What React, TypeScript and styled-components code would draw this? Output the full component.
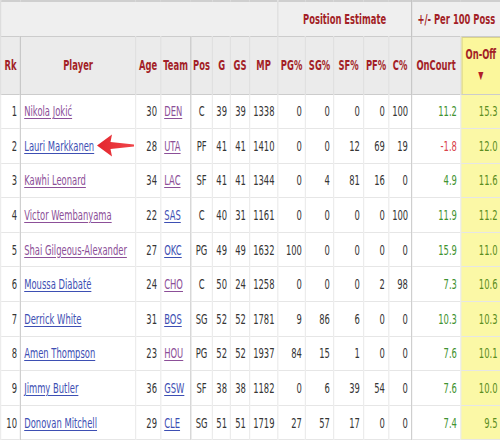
import React from "react";
import styled, { createGlobalStyle } from "styled-components";

const K = 0.6; // horizontal compression of the table
const u = (px: number) => `${px / K}px`;

const GlobalStyle = createGlobalStyle`
  html, body { margin: 0; padding: 0; background: #ffffff; }
  body { font-family: "DejaVu Sans", Verdana, sans-serif; }
`;

const Frame = styled.div`
  position: relative;
  width: 500px;
  height: 440px;
  overflow: hidden;
  background: #ffffff;
`;

const Squeeze = styled.div`
  width: ${u(500)};
  transform: scaleX(${K});
  transform-origin: 0 0;
`;

const Table = styled.table`
  width: 100%;
  table-layout: fixed;
  border-collapse: collapse;
  font-family: "DejaVu Sans", Verdana, sans-serif;
  font-size: 14px;
  color: #353535;
`;

const Col = styled.col<{ $w: number }>`
  width: ${(p) => u(p.$w)};
`;

const OverRow = styled.tr`
  height: 35px;
  background: #efefef;
  border-top: 2px solid #cfcfcf;
  border-bottom: 1px solid #cccccc;
`;

const OverCell = styled.th<{ $dark?: boolean }>`
  font-weight: bold;
  color: #a31f27;
  text-align: center;
  white-space: nowrap;
  padding: 0;
  border-left: 2px solid ${(p) => (p.$dark ? "#c4c4c4" : "#dddddd")};
`;

const HeadRow = styled.tr`
  height: 58px;
  background: #ebebeb;
  border-bottom: 1px solid #cccccc;
`;

const HeadCell = styled.th<{ $sep?: boolean; $sorted?: boolean }>`
  font-weight: bold;
  color: #a31f27;
  text-align: center;
  vertical-align: middle;
  white-space: nowrap;
  padding: 0;
  line-height: 21px;
  border-left: 2px solid ${(p) => (p.$sep ? "#c8c8c8" : "#e0e0e0")};
  background: ${(p) => (p.$sorted ? "#fbf79c" : "transparent")};
  ${(p) => (p.$sorted ? "box-shadow: inset 2px 1px 0 #d9d28a;" : "")}
`;

const SortMark = styled.span`
  display: block;
  font-size: 11px;
  color: #b0202a;
`;

const BodyRow = styled.tr`
  height: 34.6px;
  border-bottom: 1px solid #e6e6e6;
`;

type Align = "left" | "right" | "center";

const Cell = styled.td<{ $align?: Align; $sep?: boolean; $sorted?: boolean; $tone?: "pos" | "neg" }>`
  text-align: ${(p) => p.$align ?? "right"};
  vertical-align: middle;
  white-space: nowrap;
  padding: 0 ${u(3)};
  border-left: 2px solid ${(p) => (p.$sep ? "#cfcfcf" : "#ececec")};
  background: ${(p) => (p.$sorted ? "#fbf8a6" : "transparent")};
  color: ${(p) => (p.$tone === "pos" ? (p.$sorted ? "#5b8d1f" : "#3f9331") : p.$tone === "neg" ? "#d9434a" : "#353535")};
`;

const PlayerLink = styled.a<{ $visited?: boolean }>`
  color: ${(p) => (p.$visited ? "#8c4f98" : "#3d4fb3")};
  text-decoration: underline;
  text-underline-offset: 2px;
`;

const Arrow = styled.svg`
  position: absolute;
  left: 96px;
  top: 133px;
  width: 40px;
  height: 25px;
  pointer-events: none;
`;

type Row = {
  rk: number;
  name: string;
  nameVisited: boolean;
  age: number;
  team: string;
  teamVisited: boolean;
  pos: string;
  g: number;
  gs: number;
  mp: number;
  pg: number;
  sg: number;
  sf: number;
  pf: number;
  c: number;
  on: string;
  onOff: string;
};

const rows: Row[] = [
  { rk: 1, name: "Nikola Jokić", nameVisited: true, age: 30, team: "DEN", teamVisited: true, pos: "C", g: 39, gs: 39, mp: 1338, pg: 0, sg: 0, sf: 0, pf: 0, c: 100, on: "11.2", onOff: "15.3" },
  { rk: 2, name: "Lauri Markkanen", nameVisited: false, age: 28, team: "UTA", teamVisited: true, pos: "PF", g: 41, gs: 41, mp: 1410, pg: 0, sg: 0, sf: 12, pf: 69, c: 19, on: "-1.8", onOff: "12.0" },
  { rk: 3, name: "Kawhi Leonard", nameVisited: true, age: 34, team: "LAC", teamVisited: true, pos: "SF", g: 41, gs: 41, mp: 1344, pg: 0, sg: 4, sf: 81, pf: 16, c: 0, on: "4.9", onOff: "11.6" },
  { rk: 4, name: "Victor Wembanyama", nameVisited: true, age: 22, team: "SAS", teamVisited: false, pos: "C", g: 40, gs: 31, mp: 1161, pg: 0, sg: 0, sf: 0, pf: 0, c: 100, on: "11.9", onOff: "11.2" },
  { rk: 5, name: "Shai Gilgeous-Alexander", nameVisited: true, age: 27, team: "OKC", teamVisited: false, pos: "PG", g: 49, gs: 49, mp: 1632, pg: 100, sg: 0, sf: 0, pf: 0, c: 0, on: "15.9", onOff: "11.0" },
  { rk: 6, name: "Moussa Diabaté", nameVisited: false, age: 24, team: "CHO", teamVisited: true, pos: "C", g: 50, gs: 24, mp: 1258, pg: 0, sg: 0, sf: 0, pf: 2, c: 98, on: "7.3", onOff: "10.6" },
  { rk: 7, name: "Derrick White", nameVisited: false, age: 31, team: "BOS", teamVisited: false, pos: "SG", g: 52, gs: 52, mp: 1781, pg: 9, sg: 86, sf: 6, pf: 0, c: 0, on: "10.3", onOff: "10.3" },
  { rk: 8, name: "Amen Thompson", nameVisited: false, age: 23, team: "HOU", teamVisited: true, pos: "PG", g: 52, gs: 52, mp: 1937, pg: 84, sg: 15, sf: 1, pf: 0, c: 0, on: "7.6", onOff: "10.1" },
  { rk: 9, name: "Jimmy Butler", nameVisited: false, age: 36, team: "GSW", teamVisited: false, pos: "SF", g: 38, gs: 38, mp: 1182, pg: 0, sg: 6, sf: 39, pf: 54, c: 0, on: "7.6", onOff: "10.0" },
  { rk: 10, name: "Donovan Mitchell", nameVisited: false, age: 29, team: "CLE", teamVisited: false, pos: "SG", g: 51, gs: 51, mp: 1719, pg: 27, sg: 57, sf: 17, pf: 0, c: 0, on: "7.4", onOff: "9.5" },
];

const widths = [20, 115, 25, 30, 22, 18, 19, 28, 28, 28, 30, 25, 23, 49, 40];

export default function App() {
  return (
    <Frame>
      <GlobalStyle />
      <Squeeze>
        <Table>
          <colgroup>
            {widths.map((w, i) => (
              <Col key={i} $w={w} />
            ))}
          </colgroup>
          <thead>
            <OverRow>
              <OverCell colSpan={8} />
              <OverCell colSpan={5}>Position Estimate</OverCell>
              <OverCell colSpan={2} $dark>
                +/- Per 100 Poss
              </OverCell>
            </OverRow>
            <HeadRow>
              <HeadCell>Rk</HeadCell>
              <HeadCell $sep>Player</HeadCell>
              <HeadCell>Age</HeadCell>
              <HeadCell>Team</HeadCell>
              <HeadCell $sep>Pos</HeadCell>
              <HeadCell>G</HeadCell>
              <HeadCell>GS</HeadCell>
              <HeadCell>MP</HeadCell>
              <HeadCell>PG%</HeadCell>
              <HeadCell>SG%</HeadCell>
              <HeadCell>SF%</HeadCell>
              <HeadCell>PF%</HeadCell>
              <HeadCell>C%</HeadCell>
              <HeadCell $sep>OnCourt</HeadCell>
              <HeadCell $sorted>
                On-Off
                <SortMark>▼</SortMark>
              </HeadCell>
            </HeadRow>
          </thead>
          <tbody>
            {rows.map((r) => (
              <BodyRow key={r.rk}>
                <Cell>{r.rk}</Cell>
                <Cell $align="left" $sep>
                  <PlayerLink href="#" $visited={r.nameVisited}>
                    {r.name}
                  </PlayerLink>
                </Cell>
                <Cell>{r.age}</Cell>
                <Cell $align="left">
                  <PlayerLink href="#" $visited={r.teamVisited}>
                    {r.team}
                  </PlayerLink>
                </Cell>
                <Cell $align="center" $sep>
                  {r.pos}
                </Cell>
                <Cell>{r.g}</Cell>
                <Cell>{r.gs}</Cell>
                <Cell>{r.mp}</Cell>
                <Cell>{r.pg}</Cell>
                <Cell>{r.sg}</Cell>
                <Cell>{r.sf}</Cell>
                <Cell>{r.pf}</Cell>
                <Cell>{r.c}</Cell>
                <Cell $sep $tone={r.on.startsWith("-") ? "neg" : "pos"}>
                  {r.on}
                </Cell>
                <Cell $sorted $tone="pos">
                  {r.onOff}
                </Cell>
              </BodyRow>
            ))}
          </tbody>
        </Table>
      </Squeeze>
      <Arrow viewBox="0 0 40 25">
        <defs>
          <linearGradient id="arrowFill" x1="0" y1="0" x2="1" y2="0">
            <stop offset="0" stopColor="#e3262d" />
            <stop offset="1" stopColor="#f0454a" />
          </linearGradient>
        </defs>
        <path d="M1 12.5 L16 1.5 L14.5 9 L38 11.5 L38 13.5 L14.5 16 L16 23.5 Z" fill="url(#arrowFill)" />
      </Arrow>
    </Frame>
  );
}
